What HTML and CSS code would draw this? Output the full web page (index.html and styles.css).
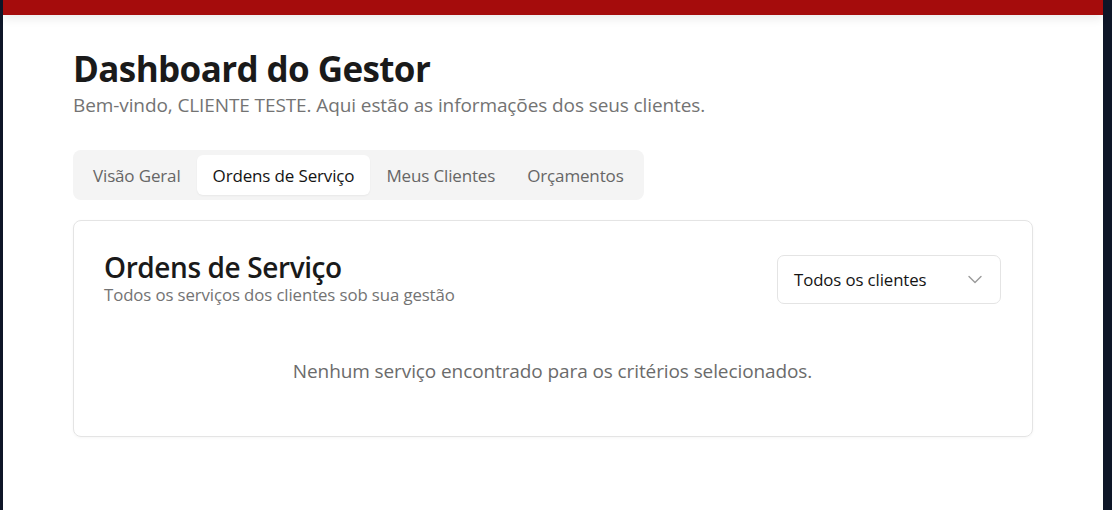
FILE: index.html
```html
<!DOCTYPE html>
<html lang="pt-BR">
<head>
<meta charset="utf-8">
<title>Dashboard do Gestor</title>
<link rel="stylesheet" href="styles.css">
</head>
<body>
<div class="frame">
  <header class="topbar"></header>
  <main class="container">
    <section class="page-head">
      <h1 class="page-title">Dashboard do Gestor</h1>
      <p class="page-sub">Bem-vindo, CLIENTE TESTE. Aqui estão as informações dos seus clientes.</p>
    </section>
    <nav class="tabs">
      <button class="tab">Visão Geral</button>
      <button class="tab tab-active">Ordens de Serviço</button>
      <button class="tab">Meus Clientes</button>
      <button class="tab">Orçamentos</button>
    </nav>
    <section class="card">
      <div class="card-head">
        <div class="card-titles">
          <h2 class="card-title">Ordens de Serviço</h2>
          <p class="card-sub">Todos os serviços dos clientes sob sua gestão</p>
        </div>
        <div class="select">
          <span class="select-text">Todos os clientes</span>
          <svg class="chev" width="16" height="16" viewBox="0 0 16 16" fill="none" stroke="#9a9a9a" stroke-width="1.4" stroke-linecap="round" stroke-linejoin="round"><path d="M2 5.5l6 6 6-6"/></svg>
        </div>
      </div>
      <p class="empty">Nenhum serviço encontrado para os critérios selecionados.</p>
    </section>
  </main>
</div>
</body>
</html>
```
FILE: styles.css
```css
* { box-sizing: border-box; }
html, body { margin: 0; padding: 0; }
body {
  background: #0e1628;
  font-family: "Open Sans", "Noto Sans", sans-serif;
  color: #1a1a1a;
}
.frame {
  margin: 0 9px 0 3px;
  background: #ffffff;
  min-height: 510px;
}
.topbar {
  height: 15px;
  background: #a50c0c;
  box-shadow: 0 4px 10px rgba(0,0,0,0.08);
}
.container {
  width: 960px;
  margin: 0 auto;
  padding-top: 32px;
}
.page-title {
  margin: 0;
  font-size: 35px;
  line-height: 44px;
  font-weight: 700;
  letter-spacing: -0.6px;
  color: #1a1a1a;
}
.page-sub {
  margin: 1px 0 0;
  font-size: 19px;
  line-height: 26px;
  color: #737373;
  letter-spacing: -0.1px;
}
.tabs {
  display: inline-flex;
  margin-top: 32px;
  padding: 5px 4px;
  background: #f4f4f4;
  border-radius: 8px;
  white-space: nowrap;
}
.tab {
  flex-shrink: 0;
  white-space: nowrap;
  border: 0;
  background: transparent;
  font-family: inherit;
  font-size: 17px;
  font-weight: 500;
  color: #666666;
  padding: 0 16px;
  height: 40px;
  border-radius: 6px;
  letter-spacing: -0.15px;
  cursor: pointer;
}
.tab-active {
  background: #ffffff;
  color: #141414;
  box-shadow: 0 1px 2px rgba(0,0,0,0.05);
}
.card {
  margin-top: 20px;
  border: 1px solid #e4e4e4;
  border-radius: 8px;
  box-shadow: 0 1px 3px rgba(0,0,0,0.04);
  padding: 30px 31px 53px 30px;
}
.card-head {
  display: flex;
  justify-content: space-between;
  align-items: center;
}
.card-title {
  margin: 0;
  font-size: 28px;
  line-height: 32px;
  font-weight: 600;
  letter-spacing: -0.4px;
  color: #1a1a1a;
}
.card-sub {
  margin: 0;
  font-size: 16.8px;
  line-height: 24px;
  color: #737373;
  letter-spacing: -0.1px;
}
.select {
  width: 224px;
  height: 49px;
  border: 1px solid #e4e4e4;
  border-radius: 7px;
  display: flex;
  align-items: center;
  justify-content: space-between;
  padding: 0 17px 0 16px;
}
.select-text {
  font-size: 16.8px;
  color: #141414;
  letter-spacing: -0.1px;
}
.chev { display: block; }
.empty {
  margin: 52px 0 0;
  text-align: center;
  font-size: 19px;
  line-height: 24px;
  color: #6b6b6b;
  letter-spacing: -0.1px;
}
```
